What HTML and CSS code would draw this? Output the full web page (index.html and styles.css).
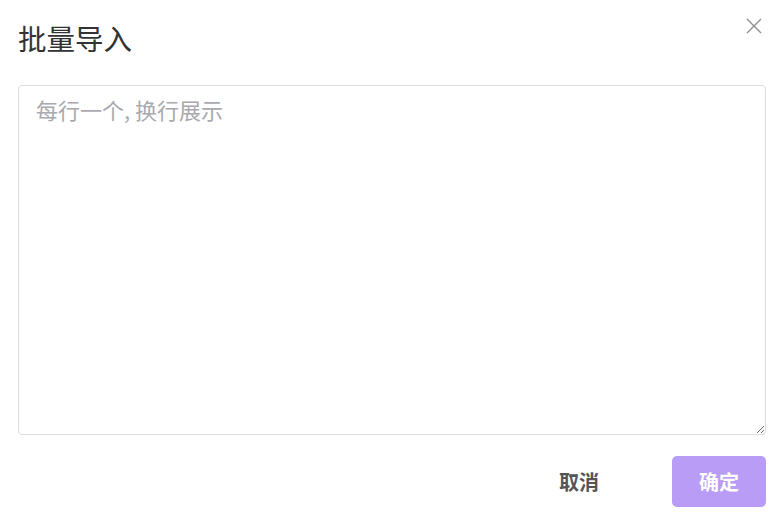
FILE: index.html
```html
<!DOCTYPE html>
<html lang="zh">
<head>
<meta charset="utf-8">
<link rel="stylesheet" href="styles.css">
</head>
<body>
<div class="dialog">
  <div class="header">
    <h1 class="title">批量导入</h1>
    <button class="close" aria-label="关闭">
      <svg width="16" height="16" viewBox="0 0 16 16"><path d="M1 1L15 15M15 1L1 15" stroke="#8e8e93" stroke-width="1.4" fill="none"/></svg>
    </button>
  </div>
  <textarea class="input" placeholder="每行一个, 换行展示"></textarea>
  <div class="footer">
    <button class="btn btn-cancel">取消</button>
    <button class="btn btn-ok">确定</button>
  </div>
</div>
</body>
</html>
```
FILE: styles.css
```css
html, body {
  margin: 0;
  padding: 0;
  background: #fff;
}
body {
  font-family: "Noto Sans CJK SC", "Noto Sans", sans-serif;
}
.dialog {
  width: 784px;
  height: 528px;
  box-sizing: border-box;
  padding: 0 18px 0 18px;
  display: flex;
  flex-direction: column;
}
.header {
  height: 85px;
  display: flex;
  justify-content: space-between;
  align-items: flex-start;
}
.title {
  margin: 0;
  padding-top: 18px;
  font-size: 28.5px;
  line-height: 40px;
  font-weight: 400;
  color: #333;
}
.close {
  margin-top: 18px;
  margin-right: 4px;
  padding: 0;
  border: 0;
  background: none;
  width: 16px;
  height: 16px;
  cursor: pointer;
}
.close svg { display: block; }
.input {
  width: 748px;
  height: 350px;
  box-sizing: border-box;
  border: 1px solid #dcdce0;
  border-radius: 4px;
  padding: 8px 17px;
  font-family: inherit;
  font-size: 22px;
  line-height: 30px;
  color: #333;
  resize: both;
  outline: none;
}
.input::placeholder {
  color: #a9a9ae;
}
.footer {
  margin-top: 21px;
  display: flex;
  justify-content: flex-end;
  gap: 54px;
}
.btn {
  height: 51px;
  border: 0;
  border-radius: 5px;
  font-family: inherit;
  font-size: 20px;
  line-height: 51px;
  font-weight: 700;
  padding: 0;
  cursor: pointer;
}
.btn-cancel {
  padding: 0 19px 3px;
  background: transparent;
  color: #555;
}
.btn-ok {
  width: 94px;
  background: #b99cf6;
  color: #fff;
}
```
